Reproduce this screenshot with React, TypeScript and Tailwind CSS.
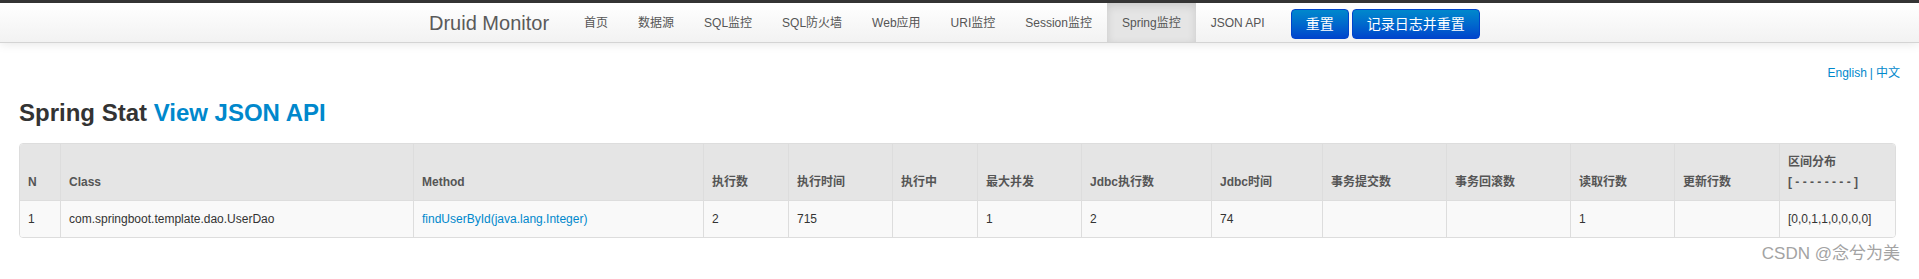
import React from "react";

const navItems = ["首页", "数据源", "SQL监控", "SQL防火墙", "Web应用", "URI监控", "Session监控", "Spring监控", "JSON API"];

const headers: React.ReactNode[] = [
  "N",
  "Class",
  "Method",
  "执行数",
  "执行时间",
  "执行中",
  "最大并发",
  "Jdbc执行数",
  "Jdbc时间",
  "事务提交数",
  "事务回滚数",
  "读取行数",
  "更新行数",
  <>
    <span>区间分布</span>
    <span>[ - - - - - - - - ]</span>
  </>,
];

const row: React.ReactNode[] = [
  "1",
  "com.springboot.template.dao.UserDao",
  <a className="text-[#0088cc]">findUserById(java.lang.Integer)</a>,
  "2",
  "715",
  "",
  "1",
  "2",
  "74",
  "",
  "",
  "1",
  "",
  "[0,0,1,1,0,0,0,0]",
];

export default function App() {
  return (
    <div className="relative min-h-[279px] bg-white text-[12px] leading-5 text-[#333] [font-family:'Liberation_Sans','Noto_Sans_CJK_SC',sans-serif]">
      <div className="h-[3px] bg-[#363636]" />
      <div className="flex h-[40px] border-b border-[#d4d4d4] bg-gradient-to-b from-white to-[#f2f2f2] pl-[429px] shadow-[0_1px_10px_rgba(0,0,0,0.1)]">
        <span className="flex items-center pr-[20px] text-[20px] text-[#5a5a5a]">Druid Monitor</span>
        {navItems.map((item) => (
          <a
            key={item}
            className={
              item === "Spring监控"
                ? "flex items-center bg-[#e5e5e5] px-[15px] text-[#555] shadow-[inset_0_3px_8px_rgba(0,0,0,0.125)]"
                : "flex items-center px-[15px] text-[#555]"
            }
          >
            {item}
          </a>
        ))}
        <div className="ml-[11px] mt-[6px] flex gap-[3px] self-start">
          <button className="h-[30px] rounded-[4px] border border-[#0044cc] bg-gradient-to-b from-[#0088cc] to-[#0044cc] px-[14px] text-[14px] text-white">
            重置
          </button>
          <button className="h-[30px] rounded-[4px] border border-[#0044cc] bg-gradient-to-b from-[#0088cc] to-[#0044cc] px-[14px] text-[14px] text-white">
            记录日志并重置
          </button>
        </div>
      </div>

      <div className="px-[19px] pt-[20px]">
        <div className="flex justify-end text-[#0088cc]">
          <a>English</a>
          <span className="px-[3px]">|</span>
          <a>中文</a>
        </div>
        <h1 className="mt-[10px] text-[24px] font-bold leading-[40px] text-[#333]">
          Spring Stat <a className="text-[#0088cc]">View JSON API</a>
        </h1>
        <div className="mt-[10px] w-[1877px] overflow-hidden rounded-[4px] border border-[#ddd]">
          <div className="grid grid-cols-[40px_353px_290px_85px_104px_85px_104px_130px_111px_124px_124px_104px_105px_116px]">
            {headers.map((h, i) => (
              <div
                key={"h" + i}
                className={
                  i === 0
                    ? "flex h-[56px] flex-col justify-end bg-[#e5e5e5] p-2 font-bold text-[#555]"
                    : "flex h-[56px] flex-col justify-end border-l border-[#ddd] bg-[#e5e5e5] p-2 font-bold text-[#555]"
                }
              >
                {h}
              </div>
            ))}
            {row.map((c, i) => (
              <div
                key={"r" + i}
                className={
                  i === 0
                    ? "h-[37px] border-t border-[#ddd] bg-[#f9f9f9] p-2"
                    : "h-[37px] border-l border-t border-[#ddd] bg-[#f9f9f9] p-2"
                }
              >
                {c}
              </div>
            ))}
          </div>
        </div>
      </div>

      <div className="absolute right-[19px] top-[244px] text-[17px] leading-5 text-[#a3a3a3]">CSDN @念兮为美</div>
    </div>
  );
}
